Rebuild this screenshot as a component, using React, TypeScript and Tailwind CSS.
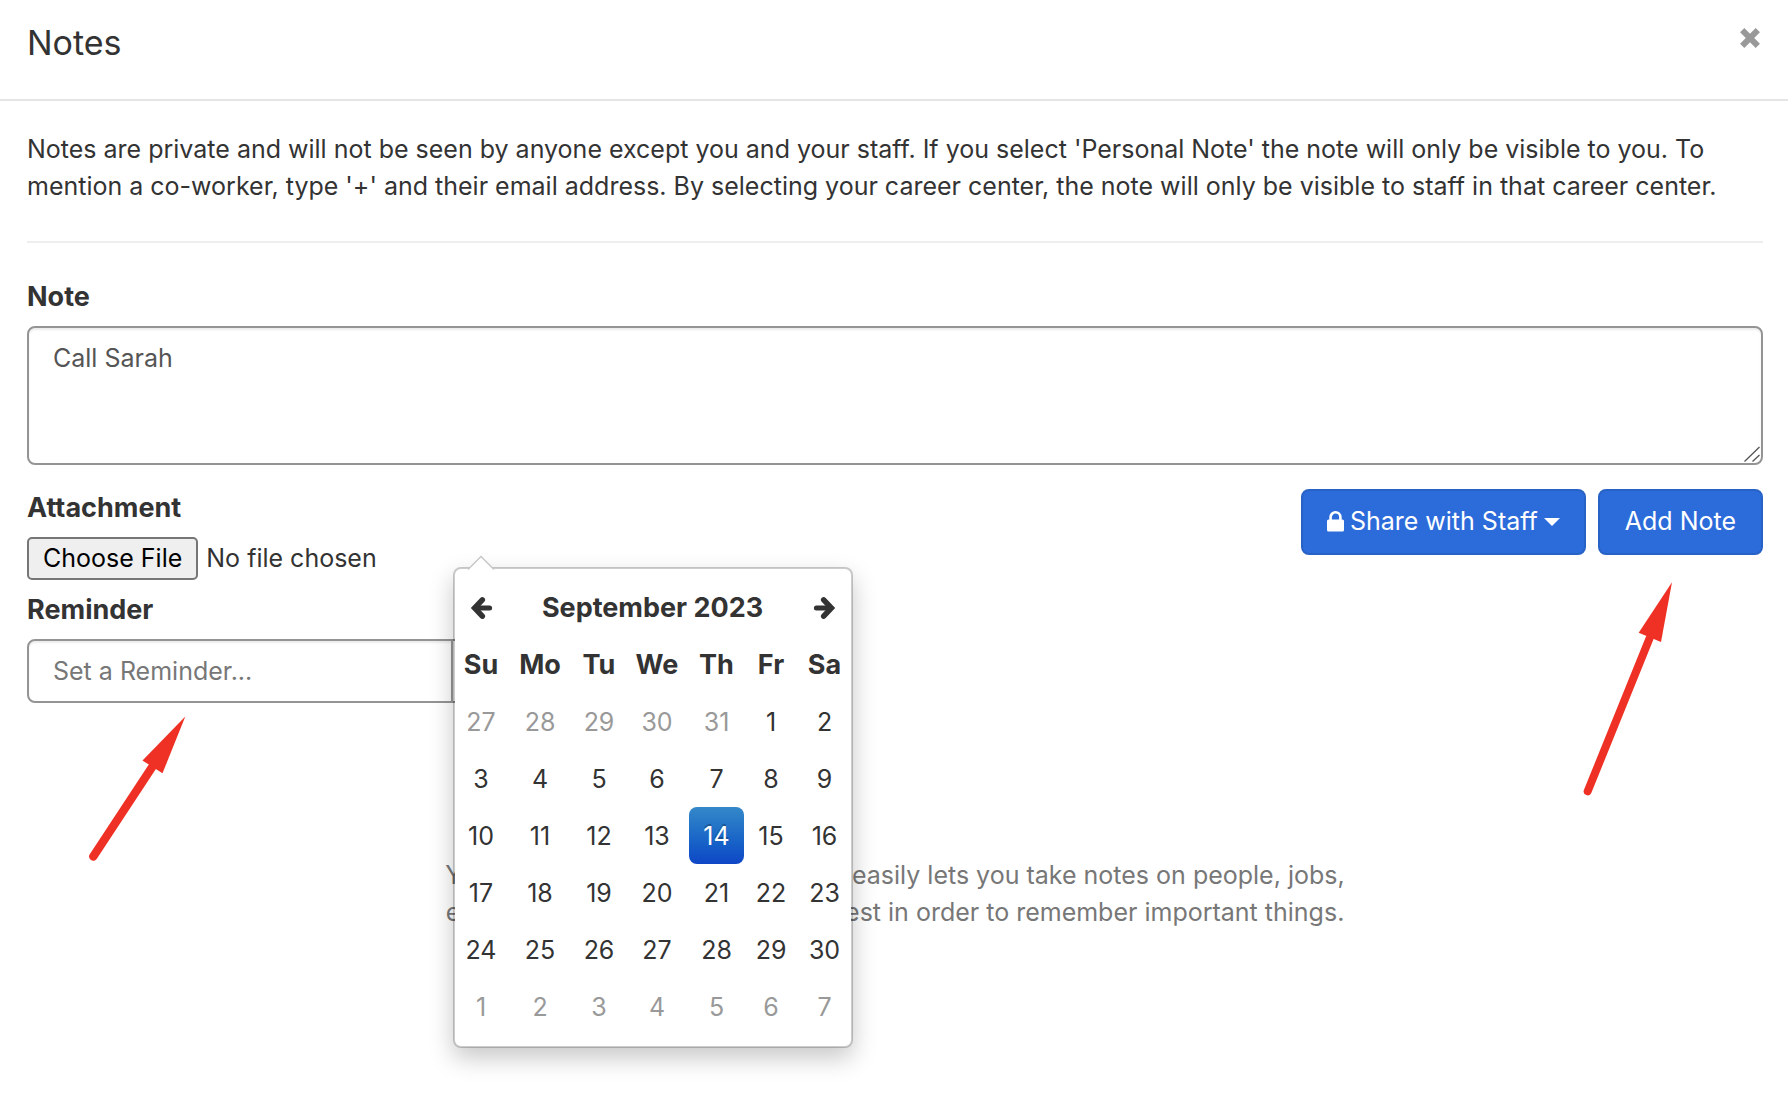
import { useState } from "react";

const weekdays = ["Su", "Mo", "Tu", "We", "Th", "Fr", "Sa"];

const weeks = [
  [27, 28, 29, 30, 31, 1, 2],
  [3, 4, 5, 6, 7, 8, 9],
  [10, 11, 12, 13, 14, 15, 16],
  [17, 18, 19, 20, 21, 22, 23],
  [24, 25, 26, 27, 28, 29, 30],
  [1, 2, 3, 4, 5, 6, 7],
];

function ArrowIcon({ className = "" }: { className?: string }) {
  return (
    <svg viewBox="0 0 24 24" className={`h-6 w-6 ${className}`} fill="none" stroke="currentColor" strokeWidth="5.5" strokeLinecap="round">
      <path d="M13.3 3.8 5.6 12l7.7 8.2" strokeLinejoin="miter" />
      <path d="M7 12h13.6" strokeWidth="5" />
    </svg>
  );
}

function LockIcon() {
  return (
    <svg viewBox="0 0 17 21" className="h-[21px] w-[17px]">
      <path d="M3.6 9.5V6.2a4.9 4.9 0 0 1 9.8 0v3.3" fill="none" stroke="currentColor" strokeWidth="2.6" />
      <rect y="8.5" width="17" height="12" rx="1.6" fill="currentColor" />
    </svg>
  );
}

function Calendar() {
  const [selected, setSelected] = useState(14);

  return (
    <div className="absolute -top-[72px] left-[426px] z-10 w-[400px] rounded-lg border-2 border-black/20 bg-white bg-clip-padding pt-[10px] pb-[11px] shadow-[0_10px_24px_rgba(0,0,0,0.22)]">
      {/* pointer */}
      <svg viewBox="0 0 28 16" className="absolute -top-[14px] left-3 h-4 w-7">
        <path d="M1 14.5 14 1.5l13 13V16H1z" fill="#fff" />
        <path d="M1 14.5 14 1.5l13 13" fill="none" stroke="#c8c8c8" strokeWidth="1.5" />
      </svg>

      <table className="w-full table-fixed text-center">
        <colgroup>
          <col className="w-[52px]" />
          <col className="w-[66px]" />
          <col className="w-[52px]" />
          <col className="w-[64px]" />
          <col className="w-[55px]" />
          <col className="w-[54px]" />
          <col className="w-[53px]" />
        </colgroup>
        <thead className="text-[27px]">
          <tr className="h-[57px]">
            <th className="p-0">
              <button type="button" aria-label="Previous month" className="block w-full">
                <ArrowIcon className="mx-auto" />
              </button>
            </th>
            <th colSpan={5} className="p-0 font-bold">September 2023</th>
            <th className="p-0">
              <button type="button" aria-label="Next month" className="block w-full">
                <ArrowIcon className="mx-auto rotate-180" />
              </button>
            </th>
          </tr>
          <tr className="h-[57px]">
            {weekdays.map((d) => (
              <th key={d} className="p-0 font-bold">{d}</th>
            ))}
          </tr>
        </thead>
        <tbody>
          {weeks.map((week, i) => (
            <tr key={i} className="h-[57px]">
              {week.map((day) => {
                const outside = (i === 0 && day > 7) || i === 5;
                const active = !outside && day === selected;
                return (
                  <td key={day} className="p-0">
                    <button
                      type="button"
                      onClick={() => setSelected(day)}
                      className={`block h-[57px] w-full rounded-lg pt-px ${
                        active
                          ? "bg-gradient-to-b from-[#3488c8] to-[#1046c6] text-white [text-shadow:0_-2px_0_rgba(0,0,0,0.25)]"
                          : outside
                            ? "text-[#999]"
                            : ""
                      }`}
                    >
                      {day}
                    </button>
                  </td>
                );
              })}
            </tr>
          ))}
        </tbody>
      </table>
    </div>
  );
}

export default function App() {
  const [note, setNote] = useState("Call Sarah");

  return (
    <div className="min-h-screen bg-white font-[Inter,sans-serif] text-[25px] leading-[37px] text-[#333]">
      {/* Header */}
      <header className="flex items-start justify-between border-b-2 border-[#e5e5e5] pt-6 pr-7 pb-[38px] pl-[27px]">
        <h1 className="text-[34px]">Notes</h1>
        <button type="button" aria-label="Close" className="pt-1 text-[#999]">
          <svg viewBox="0 0 20 20" className="h-5 w-5" fill="none" stroke="currentColor" strokeWidth="6">
            <path d="M2.2 2.2l15.6 15.6M17.8 2.2 2.2 17.8" />
          </svg>
        </button>
      </header>

      <main className="pt-[30px] pr-[25px] pl-[27px]">
        <p>
          Notes are private and will not be seen by anyone except you and your staff. If you select 'Personal Note' the note will only be visible to you. To
          mention a co-worker, type '+' and their email address. By selecting your career center, the note will only be visible to staff in that career center.
        </p>

        <hr className="mt-9 mb-[35px] border-t-2 border-[#eee]" />

        <form onSubmit={(e) => e.preventDefault()}>
          <label htmlFor="note" className="mb-[11px] block text-[27px] font-bold">Note</label>
          <div className="relative">
            <textarea
              id="note"
              value={note}
              onChange={(e) => setNote(e.target.value)}
              className="block h-[139px] w-full resize-none rounded-lg border-2 border-[#949494] px-6 py-3 text-[#555] shadow-[inset_0_2px_2px_rgba(0,0,0,0.075)]"
            />
            {/* resize grip */}
            <svg viewBox="0 0 16 16" className="pointer-events-none absolute right-[3px] bottom-[3px] h-4 w-4" stroke="#555" strokeWidth="1.3">
              <path d="M.5 15.5 15.5 1M8.5 15.5l7-6.5" />
            </svg>
          </div>

          <div className="mt-6 flex items-start justify-between">
            <div>
              <label htmlFor="attachment" className="mb-[11px] block text-[27px] font-bold">Attachment</label>
              <input
                id="attachment"
                type="file"
                className="block h-[43px] leading-[39px] file:mr-2 file:h-[43px] file:rounded-[5px] file:border-2 file:border-solid file:border-[#767676] file:bg-[#efefef] file:px-[14px] file:text-black"
              />
              <label htmlFor="reminder" className="my-[11px] block text-[27px] font-bold">Reminder</label>
              <div className="relative flex">
                <input
                  id="reminder"
                  placeholder="Set a Reminder..."
                  className="h-16 w-[426px] rounded-l-lg border-2 border-[#949494] px-6 shadow-[inset_0_2px_2px_rgba(0,0,0,0.075)] placeholder:text-[#777]"
                />
                <button type="button" aria-label="Open calendar" className="h-16 w-16 rounded-r-lg border-2 border-l-0 border-[#949494]" />
                <Calendar />
                <svg viewBox="0 0 110 150" className="absolute top-[74px] left-[58px] h-[150px] w-[110px]" fill="#ee3124">
                  <path d="M100.3 3.5 57.5 47.5l20 12.8z" />
                  <path d="M67.5 53.5 8.3 143.5" stroke="#ee3124" strokeWidth="8.5" strokeLinecap="round" />
                </svg>
              </div>
            </div>

            <div className="relative flex gap-3 text-white">
              <button type="button" className="flex items-center gap-[6px] rounded-lg border-2 border-[#2763c6] bg-[#2c6bda] px-6 pt-3 pb-[13px]">
                <LockIcon />
                Share with Staff
                <svg viewBox="0 0 16 8" className="h-2 w-4" fill="currentColor">
                  <path d="M0 0h16L8 8z" />
                </svg>
              </button>
              <button type="submit" className="rounded-lg border-2 border-[#2763c6] bg-[#2c6bda] px-[25px] pt-3 pb-[13px]">Add Note</button>
              <svg viewBox="0 0 96 220" className="absolute top-[90px] right-[87px] h-[220px] w-24" fill="#ee3124">
                <path d="M92 3.3 58.7 53.7 81 63z" />
                <path d="M69.5 59.5 7.7 212.3" stroke="#ee3124" strokeWidth="8" strokeLinecap="round" />
              </svg>
            </div>
          </div>
        </form>

        <p className="mt-[154px] text-center text-[#777]">
          You have no notes to show. Notes easily lets you take notes on people, jobs,
          <br />
          events, and all your things of interest in order to remember important things.
        </p>
      </main>
    </div>
  );
}
